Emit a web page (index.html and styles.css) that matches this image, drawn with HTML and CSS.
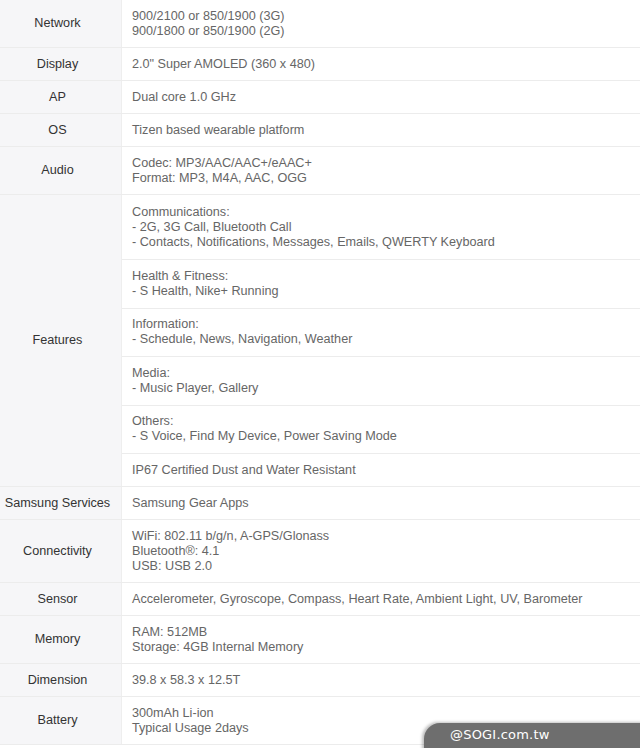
FILE: index.html
```html
<!DOCTYPE html>
<html>
<head>
<meta charset="utf-8">
<link rel="stylesheet" href="styles.css">
</head>
<body>
<table class="spec">
  <tr><th>Network</th><td>900/2100 or 850/1900 (3G)<br>900/1800 or 850/1900 (2G)</td></tr>
  <tr><th>Display</th><td>2.0" Super AMOLED (360 x 480)</td></tr>
  <tr><th>AP</th><td>Dual core 1.0 GHz</td></tr>
  <tr><th>OS</th><td>Tizen based wearable platform</td></tr>
  <tr><th>Audio</th><td>Codec: MP3/AAC/AAC+/eAAC+<br>Format: MP3, M4A, AAC, OGG</td></tr>
  <tr><th rowspan="6">Features</th><td class="tall">Communications:<br>- 2G, 3G Call, Bluetooth Call<br>- Contacts, Notifications, Messages, Emails, QWERTY Keyboard</td></tr>
  <tr><td class="feat">Health &amp; Fitness:<br>- S Health, Nike+ Running</td></tr>
  <tr><td class="feat">Information:<br>- Schedule, News, Navigation, Weather</td></tr>
  <tr><td class="feat">Media:<br>- Music Player, Gallery</td></tr>
  <tr><td class="feat">Others:<br>- S Voice, Find My Device, Power Saving Mode</td></tr>
  <tr><td>IP67 Certified Dust and Water Resistant</td></tr>
  <tr><th>Samsung Services</th><td>Samsung Gear Apps</td></tr>
  <tr><th>Connectivity</th><td>WiFi: 802.11 b/g/n, A-GPS/Glonass<br>Bluetooth®: 4.1<br>USB: USB 2.0</td></tr>
  <tr><th>Sensor</th><td>Accelerometer, Gyroscope, Compass, Heart Rate, Ambient Light, UV, Barometer</td></tr>
  <tr><th>Memory</th><td>RAM: 512MB<br>Storage: 4GB Internal Memory</td></tr>
  <tr><th>Dimension</th><td>39.8 x 58.3 x 12.5T</td></tr>
  <tr><th>Battery</th><td>300mAh Li-ion<br>Typical Usage 2days</td></tr>
</table>
<div class="watermark">@SOGI.com.tw</div>
</body>
</html>
```

FILE: styles.css
```css
html, body {
  margin: 0;
  padding: 0;
  background: #ffffff;
  overflow: hidden;
}
body {
  width: 640px;
  height: 748px;
  position: relative;
  font-family: "Liberation Sans", Arial, sans-serif;
  font-size: 12.65px;
  line-height: 15px;
}
.spec {
  width: 640px;
  border-collapse: collapse;
  border-spacing: 0;
}
.spec th, .spec td {
  border-bottom: 1px solid #ececec;
  padding: 8.5px 0;
  vertical-align: middle;
}
.spec td.tall {
  padding-top: 9.5px;
  padding-bottom: 9.5px;
}
.spec td.feat {
  padding-top: 8.75px;
  padding-bottom: 8.75px;
}
.spec th {
  width: 115px;
  padding-right: 6px;
  background: #f6f6f8;
  color: #333333;
  font-weight: normal;
  text-align: center;
  border-right: 1px solid #eeeeee;
}
.spec td {
  padding-left: 10px;
  color: #666666;
  text-align: left;
}
.watermark {
  position: absolute;
  left: 424px;
  top: 723px;
  width: 230px;
  height: 40px;
  background: #6e6e6e;
  border-top-left-radius: 16px;
  box-shadow: -2px -1px 3px rgba(0,0,0,0.25);
  color: #ffffff;
  font-family: "DejaVu Sans", Verdana, sans-serif;
  font-size: 13px;
  padding-left: 26px;
  padding-top: 4px;
  box-sizing: border-box;
  letter-spacing: 0.2px;
}
```
